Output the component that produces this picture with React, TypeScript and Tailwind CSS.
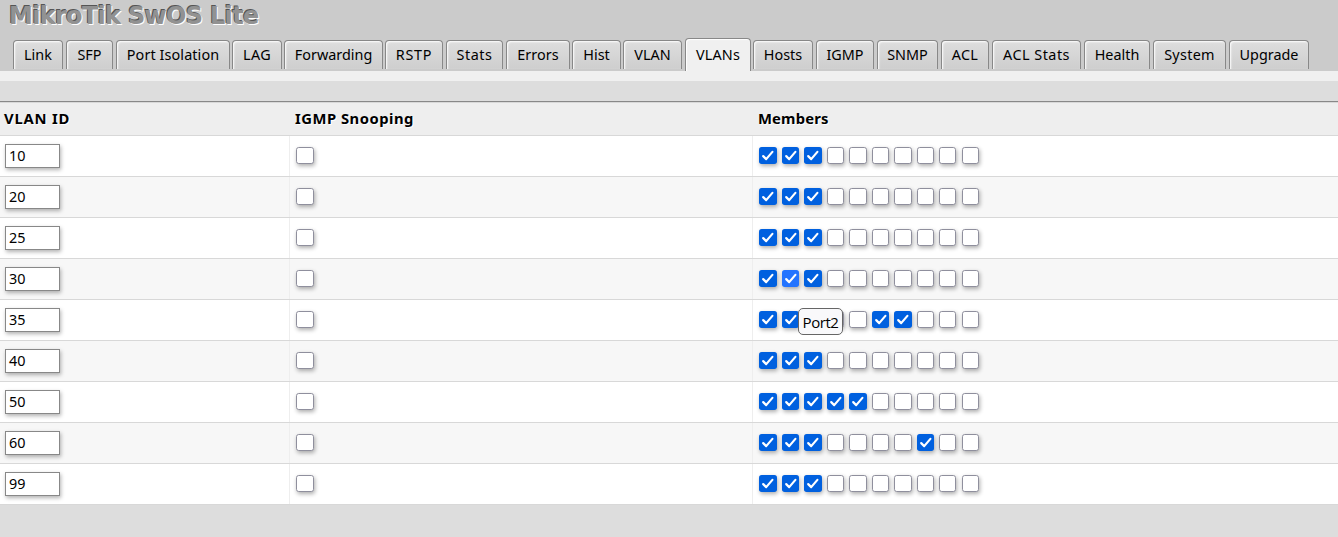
const tabs: { label: string; box: string }[] = [
  { label: 'Link', box: 'w-[50px]' },
  { label: 'SFP', box: 'w-[47px] ml-[3px]' },
  { label: 'Port Isolation', box: 'w-[114px] ml-[3px] tracking-[0.1px]' },
  { label: 'LAG', box: 'w-[50px] ml-[2px] tracking-[0.3px]' },
  { label: 'Forwarding', box: 'w-[99px] ml-[2px]' },
  { label: 'RSTP', box: 'w-[58px] ml-[2px] tracking-[0.7px]' },
  { label: 'Stats', box: 'w-[57px] ml-[3px] tracking-[0.5px]' },
  { label: 'Errors', box: 'w-[64px] ml-[3px] tracking-[0.1px]' },
  { label: 'Hist', box: 'w-[49px] ml-[2px]' },
  { label: 'VLAN', box: 'w-[59px] ml-[2px]' },
  { label: 'VLANs', box: 'w-[66px] ml-[3px] tracking-[0.2px]' },
  { label: 'Hosts', box: 'w-[60px] ml-[2px]' },
  { label: 'IGMP', box: 'w-[58px] ml-[3px]' },
  { label: 'SNMP', box: 'w-[61px] ml-[3px]' },
  { label: 'ACL', box: 'w-[48px] ml-[3px] tracking-[0.3px]' },
  { label: 'ACL Stats', box: 'w-[89px] ml-[3px] tracking-[0.5px]' },
  { label: 'Health', box: 'w-[66px] ml-[3px]' },
  { label: 'System', box: 'w-[73px] ml-[3px] tracking-[0.3px]' },
  { label: 'Upgrade', box: 'w-[80px] ml-[3px]' },
];

const rows: { id: number; members: number[] }[] = [
  { id: 10, members: [0, 1, 2] },
  { id: 20, members: [0, 1, 2] },
  { id: 25, members: [0, 1, 2] },
  { id: 30, members: [0, 1, 2] },
  { id: 35, members: [0, 1, 5, 6] },
  { id: 40, members: [0, 1, 2] },
  { id: 50, members: [0, 1, 2, 3, 4] },
  { id: 60, members: [0, 1, 2, 7] },
  { id: 99, members: [0, 1, 2] },
];

const ports = Array.from({ length: 10 }, (_, i) => i);

function Tab({ label, box }: { label: string; box: string }) {
  const active = label === 'VLANs';
  return (
    <div
      className={`${box} flex shrink-0 justify-center rounded-t-[4px] border border-b-0 border-[#888] ${
        active
          ? 'h-[33px] bg-[#f0f0f0] pt-[5px] shadow-[inset_1px_1px_1px_#fff]'
          : 'mb-[2px] h-[29px] bg-linear-to-b from-[#dedede] to-[#cecece] pt-[3px] shadow-[inset_1px_1px_2px_#fff]'
      }`}
    >
      <span className="whitespace-nowrap text-[14.4px] leading-[22px]">{label}</span>
    </div>
  );
}

function Check({ checked, hover = false }: { checked: boolean; hover?: boolean }) {
  if (!checked) {
    return (
      <span className="block size-[17.3px] shrink-0 rounded-[2.7px] border border-[#8f8f9d] bg-white shadow-[1px_2px_4px_rgba(0,0,0,0.32)]" />
    );
  }
  return (
    <span
      className={`block size-[17.3px] shrink-0 rounded-[2.7px] shadow-[1px_2px_4px_rgba(0,0,0,0.32)] ${
        hover ? 'bg-[#2474ff]' : 'bg-[#0060df]'
      }`}
    >
      <svg viewBox="0 0 17.3 17.3" className="block size-full" fill="none">
        <path
          d="M4.2 9.1 7.2 12.1 13.4 4.9"
          stroke="#fff"
          strokeWidth="2.2"
          strokeLinecap="round"
          strokeLinejoin="round"
        />
      </svg>
    </span>
  );
}

export default function App() {
  return (
    <div className="h-[537px] w-[1338px] overflow-hidden bg-[#ddd] font-['Noto_Sans',sans-serif] text-black">
      <header className="flex h-[71px] flex-col bg-[#cbcbcb]">
        <h1 className="h-[38px] whitespace-nowrap pl-[9px] font-['DejaVu_Sans',sans-serif] text-[24px] leading-[33px] font-bold tracking-[-0.7px] text-[#929292] [text-shadow:-1px_-1px_0_#555,1px_1px_0_#fff]">
          MikroTik SwOS Lite
        </h1>
        <nav className="flex h-[33px] items-end pl-[13px]">
          {tabs.map((t) => (
            <Tab key={t.label} label={t.label} box={t.box} />
          ))}
        </nav>
      </header>
      <div className="h-[10px] bg-[#f0f0f0]" />
      <div className="h-5 bg-[#ddd]" />
      <main className="border-t border-[#888] bg-[#eee]">
        <div className="grid h-[34px] grid-cols-[289px_463px_1fr] border-y border-[#d8d8d8] text-[14.8px] leading-[30px] font-bold [text-shadow:1px_1px_0_#fff]">
          <div className="pl-1 tracking-[0.8px]">VLAN ID</div>
          <div className="pl-[6px] tracking-[0.5px]">IGMP Snooping</div>
          <div className="pl-[6px] tracking-[0.15px]">Members</div>
        </div>
        {rows.map((row, r) => (
          <div
            key={row.id}
            className={`grid h-[41px] grid-cols-[289px_463px_1fr] border-b border-[#d8d8d8] ${
              r % 2 ? 'bg-[#f7f7f7]' : 'bg-white'
            }`}
          >
            <div className="flex items-center pl-[5px]">
              <div className="h-6 w-[55px] border border-[#888] bg-white pl-[3px] text-[14.4px] leading-[21px] shadow-[1px_2px_4px_rgba(0,0,0,0.3)]">
                {row.id}
              </div>
            </div>
            <div className="flex items-center border-l border-[#eee] pb-px pl-[6.3px]">
              <Check checked={false} />
            </div>
            <div className="relative flex items-center gap-[5.2px] border-l border-[#eee] pb-px pl-[6.3px]">
              {ports.map((p) => (
                <Check key={p} checked={row.members.includes(p)} hover={row.id === 30 && p === 1} />
              ))}
              {row.id === 35 && (
                <div className="absolute top-[8px] left-[45px] flex h-[27px] w-[45px] items-center justify-center rounded-[5px] border border-[#666] bg-[#f9f9fb] pt-[2px] font-['Open_Sans',sans-serif] text-[15px] tracking-[-0.45px]">
                  Port2
                </div>
              )}
            </div>
          </div>
        ))}
      </main>
    </div>
  );
}
